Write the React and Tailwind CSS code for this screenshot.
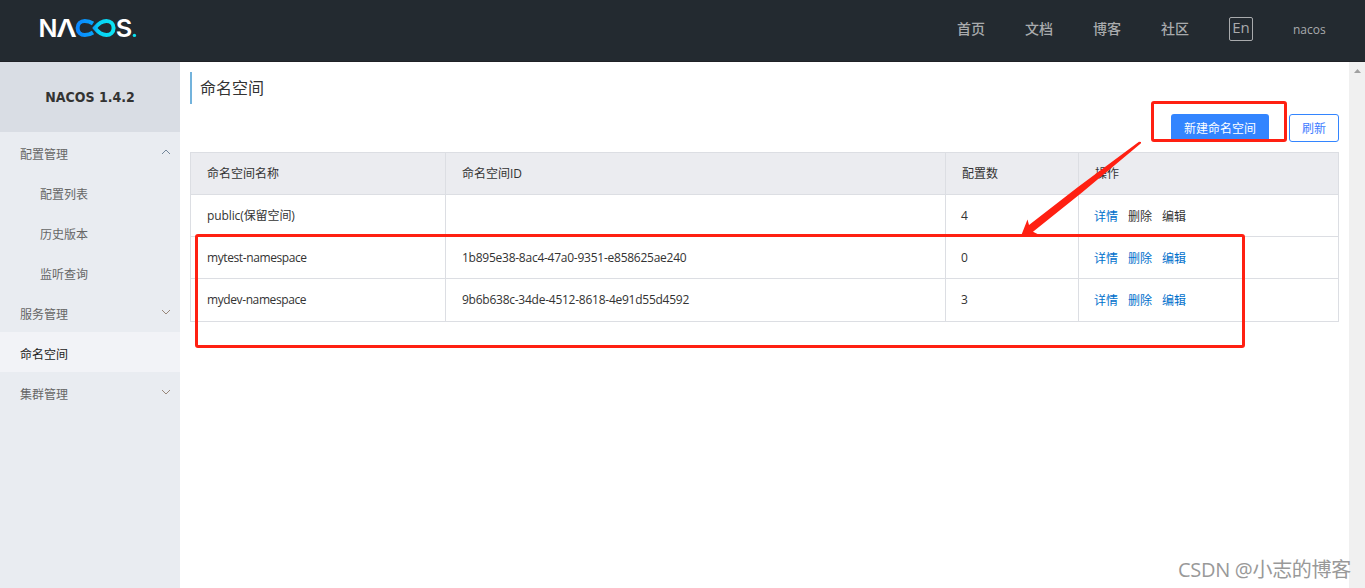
import React from "react";

const NAV = ["首页", "文档", "博客", "社区"];

const MENU = [
  { label: "配置管理", arrow: "up", children: ["配置列表", "历史版本", "监听查询"] },
  { label: "服务管理", arrow: "down" },
  { label: "命名空间", active: true },
  { label: "集群管理", arrow: "down" },
];

const ROWS = [
  { name: "public(保留空间)", id: "", count: 4, locked: true },
  { name: "mytest-namespace", id: "1b895e38-8ac4-47a0-9351-e858625ae240", count: 0 },
  { name: "mydev-namespace", id: "9b6b638c-34de-4512-8618-4e91d55d4592", count: 3 },
];

function Logo() {
  return (
    <svg className="block h-7 w-[100px] font-['Inter',sans-serif] font-semibold" viewBox="38 14 100 28">
      <defs>
        <linearGradient id="ring" gradientUnits="userSpaceOnUse" x1="76" y1="0" x2="116" y2="0">
          <stop offset="0" stopColor="#0a84ff" />
          <stop offset="0.45" stopColor="#08a5fa" />
          <stop offset="0.55" stopColor="#06d0f5" />
          <stop offset="1" stopColor="#0be6f5" />
        </linearGradient>
      </defs>
      <g fill="#fff" fontSize="24.5">
        <text x="38.4" y="37" textLength="19" lengthAdjust="spacingAndGlyphs">N</text>
        <text x="56.2" y="37" textLength="20.5" lengthAdjust="spacingAndGlyphs">Λ</text>
        <text x="115.8" y="37" textLength="16.5" lengthAdjust="spacingAndGlyphs">S</text>
      </g>
      <path
        d="M93 23.5 C90 21.5 87.5 21 84.8 21 C80.6 21 77.6 24 77.6 28 C77.6 32 80.6 35 84.8 35 C87.5 35 90 34.5 93 32.5 M94.8 28 C98 24 101.5 21 106.4 21 C110.5 21 113.6 24 113.6 28 C113.6 32 110.5 35 106.4 35 C101.5 35 98 32 94.8 28 Z"
        fill="none"
        stroke="url(#ring)"
        strokeWidth="4"
      />
      <circle cx="134.4" cy="35.4" r="1.7" fill="#0be0ee" />
    </svg>
  );
}

function Chevron({ up }) {
  return (
    <svg className="mb-[7px] h-2 w-2.5" viewBox="0 0 10 8" fill="none" stroke={up ? "#73879b" : "#99877a"} strokeWidth="1">
      <path d={up ? "M1 6 L5 2 L9 6" : "M1 2 L5 6 L9 2"} />
    </svg>
  );
}

function Header() {
  return (
    <header className="flex h-[62px] shrink-0 items-start justify-between border-b border-[#1f2126] bg-[#232a30] pl-[38px] pr-[39px] text-[#a9abad]">
      <div className="pt-3.5">
        <Logo />
      </div>
      <nav className="flex h-[58px] items-center">
        {NAV.map((n) => (
          <span key={n} className="mr-10 w-7 whitespace-nowrap text-sm font-medium">{n}</span>
        ))}
        <span className="flex h-6 w-6 items-center justify-center rounded-[2px] border border-[#a9abad] pb-1 font-['Open_Sans',sans-serif] text-[15px] font-medium leading-5">En</span>
        <span className="ml-10 w-[33px] whitespace-nowrap pt-0.5 text-[12px] font-medium">nacos</span>
      </nav>
    </header>
  );
}

function Sidebar() {
  return (
    <aside className="w-[180px] shrink-0 bg-[#e9ecf1] text-[12px] text-[#666]">
      <div className="flex h-[70px] items-center justify-center bg-[#d9dde4] font-['DejaVu_Sans_Condensed','DejaVu_Sans',sans-serif] text-[14px] font-bold text-[#333]">
        NACOS 1.4.2
      </div>
      {MENU.map((m) => (
        <div key={m.label}>
          <div className={m.active ? "flex h-10 items-center bg-[#f2f3f7] px-5 pt-1.5 text-[#222]" : "flex h-10 items-center justify-between pl-5 pr-[9px] pt-1.5"}>
            <span>{m.label}</span>
            {m.arrow && <Chevron up={m.arrow === "up"} />}
          </div>
          {m.children?.map((c) => (
            <div key={c} className="flex h-10 items-center pl-10 pt-1.5">{c}</div>
          ))}
        </div>
      ))}
    </aside>
  );
}

function NamespaceTable() {
  return (
    <table className="w-[1149px] table-fixed border-collapse text-left text-[12px] leading-4 text-[#333]">
      <colgroup>
        <col className="w-[255px]" />
        <col className="w-[500px]" />
        <col className="w-[133px]" />
        <col className="w-[260px]" />
      </colgroup>
      <thead>
        <tr className="h-[42px] bg-[#ebecf0]">
          {["命名空间名称", "命名空间ID", "配置数", "操作"].map((h) => (
            <th key={h} className="border border-[#dcdee3] pb-0 pl-4 pr-0 pt-px font-normal">{h}</th>
          ))}
        </tr>
      </thead>
      <tbody>
        {ROWS.map((r) => (
          <tr key={r.name} className="h-[42px] last:h-[43px]">
            <td className="border border-[#dcdee3] px-4 py-0">
              <span className={r.locked ? "tracking-[-0.1px]" : "tracking-[-0.4px]"}>{r.name}</span>
            </td>
            <td className="border border-[#dcdee3] px-4 py-0 tracking-[-0.25px]">{r.id}</td>
            <td className="border border-[#dcdee3] px-[15px] py-0">{r.count}</td>
            <td className="border border-[#dcdee3] px-[15px] pb-0 pt-0.5">
              <div className={r.locked ? "flex gap-2.5" : "flex gap-2.5 text-[#0070cc]"}>
                <span className="text-[#0070cc]">详情</span>
                <span>删除</span>
                <span>编辑</span>
              </div>
            </td>
          </tr>
        ))}
      </tbody>
    </table>
  );
}

export default function App() {
  return (
    <div className="relative flex h-[588px] w-[1365px] flex-col overflow-hidden bg-white font-['Open_Sans','Noto_Sans_CJK_SC',sans-serif]">
      <Header />
      <div className="flex min-h-0 flex-1">
        <Sidebar />
        <main className="min-w-0 flex-1 pl-2.5 pt-2.5">
          <h1 className="flex h-8 items-center border-l-2 border-[#73b3dc] pl-2 text-[16px] text-[#333]">命名空间</h1>
          <div className="mb-2.5 mt-2.5 flex h-7 justify-end gap-5 pr-[10px] text-[12px]">
            <button className="h-7 w-[98px] rounded-[3px] bg-[#3385ff] pt-0.5 text-white">新建命名空间</button>
            <button className="h-7 w-[50px] rounded-[3px] border border-[#3385ff] bg-white pt-0.5 text-[#3d7bff]">刷新</button>
          </div>
          <NamespaceTable />
        </main>
        <div className="flex w-4 shrink-0 justify-center bg-[#f0f0f0] pt-[7px]">
          <svg className="h-1 w-[7px]" viewBox="0 0 7 4"><path d="M0 4 L3.5 0 L7 4Z" fill="#a0a0a0" /></svg>
        </div>
      </div>

      <div className="absolute left-[1151px] top-[101px] h-[41px] w-[136px] rounded-[3px] border-[3px] border-[#ff2012]" />
      <div className="absolute left-[195px] top-[234px] h-[114px] w-[1050px] rounded-[3px] border-[3px] border-[#ff2012]" />
      <svg className="absolute left-[1015px] top-[138px] h-[100px] w-[130px]" viewBox="1015 138 130 100">
        <path d="M1141 142 L1139 141.8 L1078 187 L1029 225 L1027.5 219.5 L1021 236 L1038.5 234.5 L1033 231.8 L1082 192.5 L1141 143.2 Z" fill="#ff2012" />
      </svg>
      <div className="absolute left-[1178px] top-[556px] whitespace-nowrap text-[20px] leading-7 tracking-[-0.3px] text-[#999] [text-shadow:-1px_-1px_0_#fff]">CSDN @小志的博客</div>
    </div>
  );
}
